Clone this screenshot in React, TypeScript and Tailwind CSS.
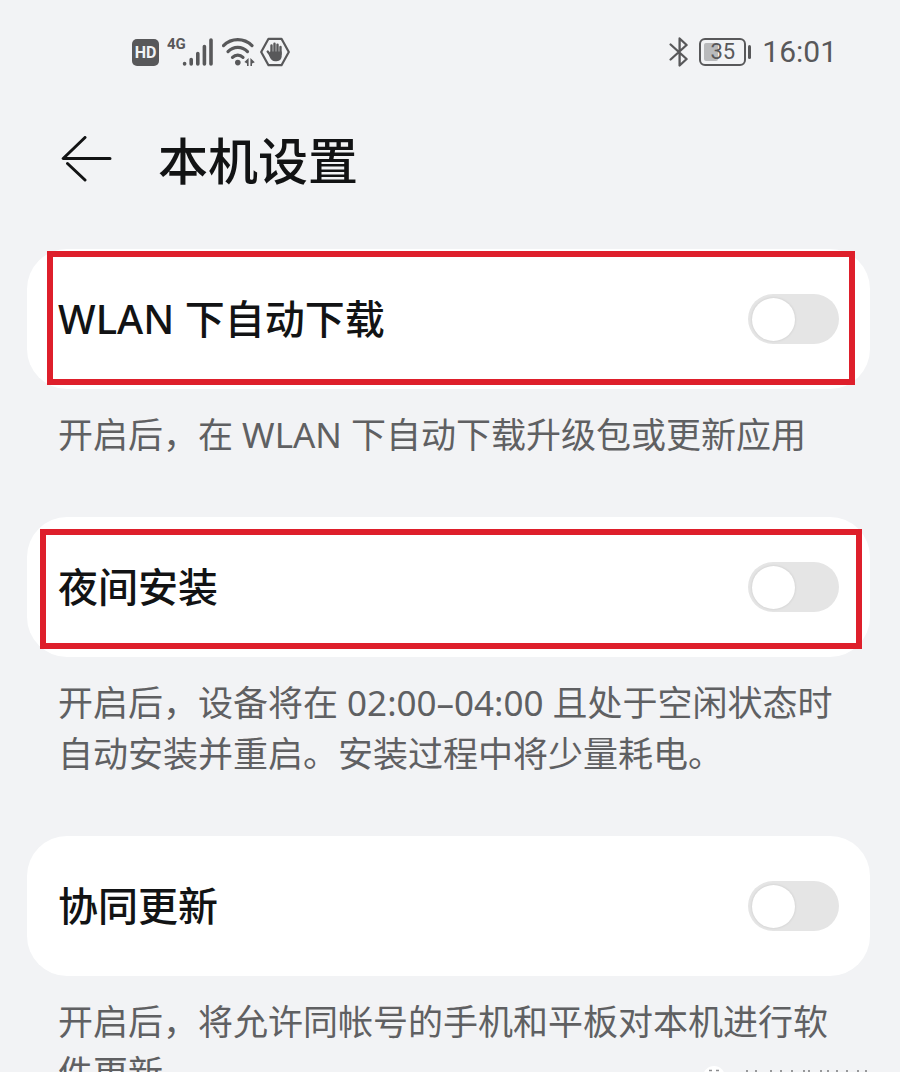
import type { ReactNode } from "react";

type Setting = {
  id: string;
  title: string;
  description: string;
  marker?: string;
};

const settings: Setting[] = [
  {
    id: "wlan-download",
    title: "WLAN 下自动下载",
    description: "开启后，在 WLAN 下自动下载升级包或更新应用",
    marker: "left-5 right-[15px] top-[2px] bottom-1",
  },
  {
    id: "night-install",
    title: "夜间安装",
    description:
      "开启后，设备将在 02:00–04:00 且处于空闲状态时自动安装并重启。安装过程中将少量耗电。",
    marker: "left-[13px] right-2 top-3 bottom-2",
  },
  {
    id: "co-update",
    title: "协同更新",
    description: "开启后，将允许同帐号的手机和平板对本机进行软件更新。",
  },
];

function SignalIcons() {
  return (
    <div className="flex items-center text-[#58585a]">
      <svg className="h-[27px] w-[27px]" viewBox="0 0 27 27">
        <rect width="27" height="27" rx="5" fill="currentColor" />
        <text
          x="13.5"
          y="19"
          textAnchor="middle"
          fill="#f2f3f5"
          className="font-['Roboto',sans-serif] text-[16px] font-bold"
        >
          HD
        </text>
      </svg>

      <svg className="ml-2 h-8 w-[47px]" viewBox="0 0 47 32" fill="none">
        <text
          x="0"
          y="13"
          fill="currentColor"
          className="font-['Liberation_Sans_Narrow','Roboto',sans-serif] text-[15px] font-bold"
        >
          4G
        </text>
        <g stroke="currentColor" strokeWidth="3.6" strokeLinecap="round">
          <path d="M17.6 27.6v.4M24.2 23.5V28M30.8 17.5V28M37.4 10.5V28M44 4V28" />
        </g>
      </svg>

      <svg className="ml-2 h-8 w-[33px]" viewBox="0 0 33 32" fill="none">
        <g stroke="currentColor" strokeWidth="3.2" strokeLinecap="round">
          <path d="M1.5 9.6C9.5 1.6 22 1.6 30 9.6" />
          <path d="M6 15.6C11.5 10 20 10 25.5 15.6" />
          <path d="M10.5 21.4C13.5 18.4 18 18.4 21 21.4" />
        </g>
        <circle cx="15.8" cy="26.6" r="2.8" fill="currentColor" />
        <path
          d="M26.6 22v8H25v-2.6l-2.6-1.5L26.6 22ZM28.4 22l4.4 4.2-2.8 1.2V30h-1.6v-8Z"
          fill="currentColor"
        />
      </svg>

      <svg className="ml-1 h-[30px] w-[31px]" viewBox="0 0 31 30" fill="none">
        <path
          d="M9.5 1.8h13L29.8 15 22.5 28.2h-13L2.2 15 9.5 1.8Z"
          stroke="currentColor"
          strokeWidth="2.2"
          strokeLinejoin="round"
        />
        <g stroke="currentColor" strokeWidth="2.4" strokeLinecap="round">
          <path d="M12.5 8.5V17M15.5 6.8V17M18.5 7.6V17M21.5 10V17M8.7 14.6l3.4 4.4" />
        </g>
        <path
          d="M11.3 14.5h11.4V19c0 3-2 5.2-5 5.2h-1.6c-2.4 0-3.8-1.4-5-3.4L9.9 18l1.4-3.5Z"
          fill="currentColor"
        />
      </svg>
    </div>
  );
}

function Battery({ level }: { level: number }) {
  return (
    <div className="flex items-center">
      <div className="relative flex h-7 w-[47px] items-center justify-center rounded-[6px] border-2 border-[#58585a]">
        <div className="absolute inset-y-[3px] left-[3px] w-[38px]">
          <div
            className="h-full rounded-[2px] bg-[#b9babc]"
            style={{ width: `${level}%` }}
          />
        </div>
        <span className="relative text-[22px] leading-none">{level}</span>
      </div>
      <span className="ml-[2px] h-[14px] w-[3px] rounded-full bg-[#58585a]" />
    </div>
  );
}

function StatusBar() {
  return (
    <div className="flex h-[104px] items-center justify-between pr-[63px] pl-[132px] text-[#58585a]">
      <SignalIcons />
      <div className="flex items-center font-['Roboto',sans-serif]">
        <svg
          className="mr-[10px] h-[30px] w-5"
          viewBox="0 0 20 30"
          fill="none"
          stroke="currentColor"
          strokeWidth="2.3"
          strokeLinecap="round"
          strokeLinejoin="round"
        >
          <path d="M1.6 7.5 17.6 22 10.6 28.5V1.5L17.6 8 1.6 22.5" />
        </svg>
        <Battery level={35} />
        <time className="ml-[11px] text-[30px] leading-none">16:01</time>
      </div>
    </div>
  );
}

function Header({ children }: { children: ReactNode }) {
  return (
    <header className="flex h-[113px] items-center gap-[46px] px-[61px] text-[#121314]">
      <button type="button" aria-label="返回">
        <svg
          className="h-[50px] w-[51px]"
          viewBox="0 0 51 50"
          fill="none"
          stroke="currentColor"
          strokeWidth="3"
          strokeLinecap="round"
          strokeLinejoin="round"
        >
          <path d="M24 1.5 2.2 22.5H49M6.5 27.5 24 44" />
        </svg>
      </button>
      <h1 className="text-[50px] leading-none font-medium">{children}</h1>
    </header>
  );
}

function SettingItem({ id, title, description, marker }: Setting) {
  return (
    <section className="flex flex-col gap-5">
      <div className="relative flex h-[140px] items-center justify-between rounded-[40px] bg-white px-[31px]">
        <label
          htmlFor={id}
          className="text-[40px] leading-none font-medium text-[#121314]"
        >
          {title}
        </label>
        <span className="flex h-[50px] w-[91px] items-center rounded-full bg-[#e5e5e5] px-1 has-checked:justify-end has-checked:bg-blue-500">
          <input
            id={id}
            type="checkbox"
            role="switch"
            aria-describedby={`${id}-desc`}
            className="size-[43px] cursor-pointer appearance-none rounded-full bg-white shadow-[0_0_3px_rgba(0,0,0,0.12)]"
          />
        </span>
        {marker && (
          <div
            className={`pointer-events-none absolute border-[6px] border-[#de1f2b] ${marker}`}
          />
        )}
      </div>
      <p
        id={`${id}-desc`}
        className="px-[31px] text-[35px] leading-[51px] text-[#5f6062]"
      >
        {description}
      </p>
    </section>
  );
}

// Top edge of the stamp that runs off the bottom of the screen
function Stamp() {
  return (
    <svg
      className="absolute right-[25px] bottom-0 h-[7px] w-[172px]"
      viewBox="0 0 172 7"
      fill="none"
    >
      <circle cx="11" cy="12" r="11" fill="#ffffff" />
      <path d="M6 5.5h3M13 5.5h3" stroke="#8b8c8e" strokeWidth="1.5" />
      <path
        d="M44 5v2M53 5v2M68 5v2M78 5v2M89 5v2M101 5v2M106 5v2M118 5v2M125 5v2M134 5v2M144 5v2M155 5v2M163 5v2"
        stroke="#97989a"
        strokeWidth="2"
      />
    </svg>
  );
}

export default function App() {
  return (
    <div className="relative h-screen overflow-hidden bg-[#f2f3f5] font-['Noto_Sans','Noto_Sans_CJK_SC',sans-serif]">
      <StatusBar />
      <Header>本机设置</Header>
      <main className="flex flex-col gap-[57px] pt-8 pr-[30px] pl-[27px]">
        {settings.map((setting) => (
          <SettingItem key={setting.id} {...setting} />
        ))}
      </main>
      <Stamp />
    </div>
  );
}
